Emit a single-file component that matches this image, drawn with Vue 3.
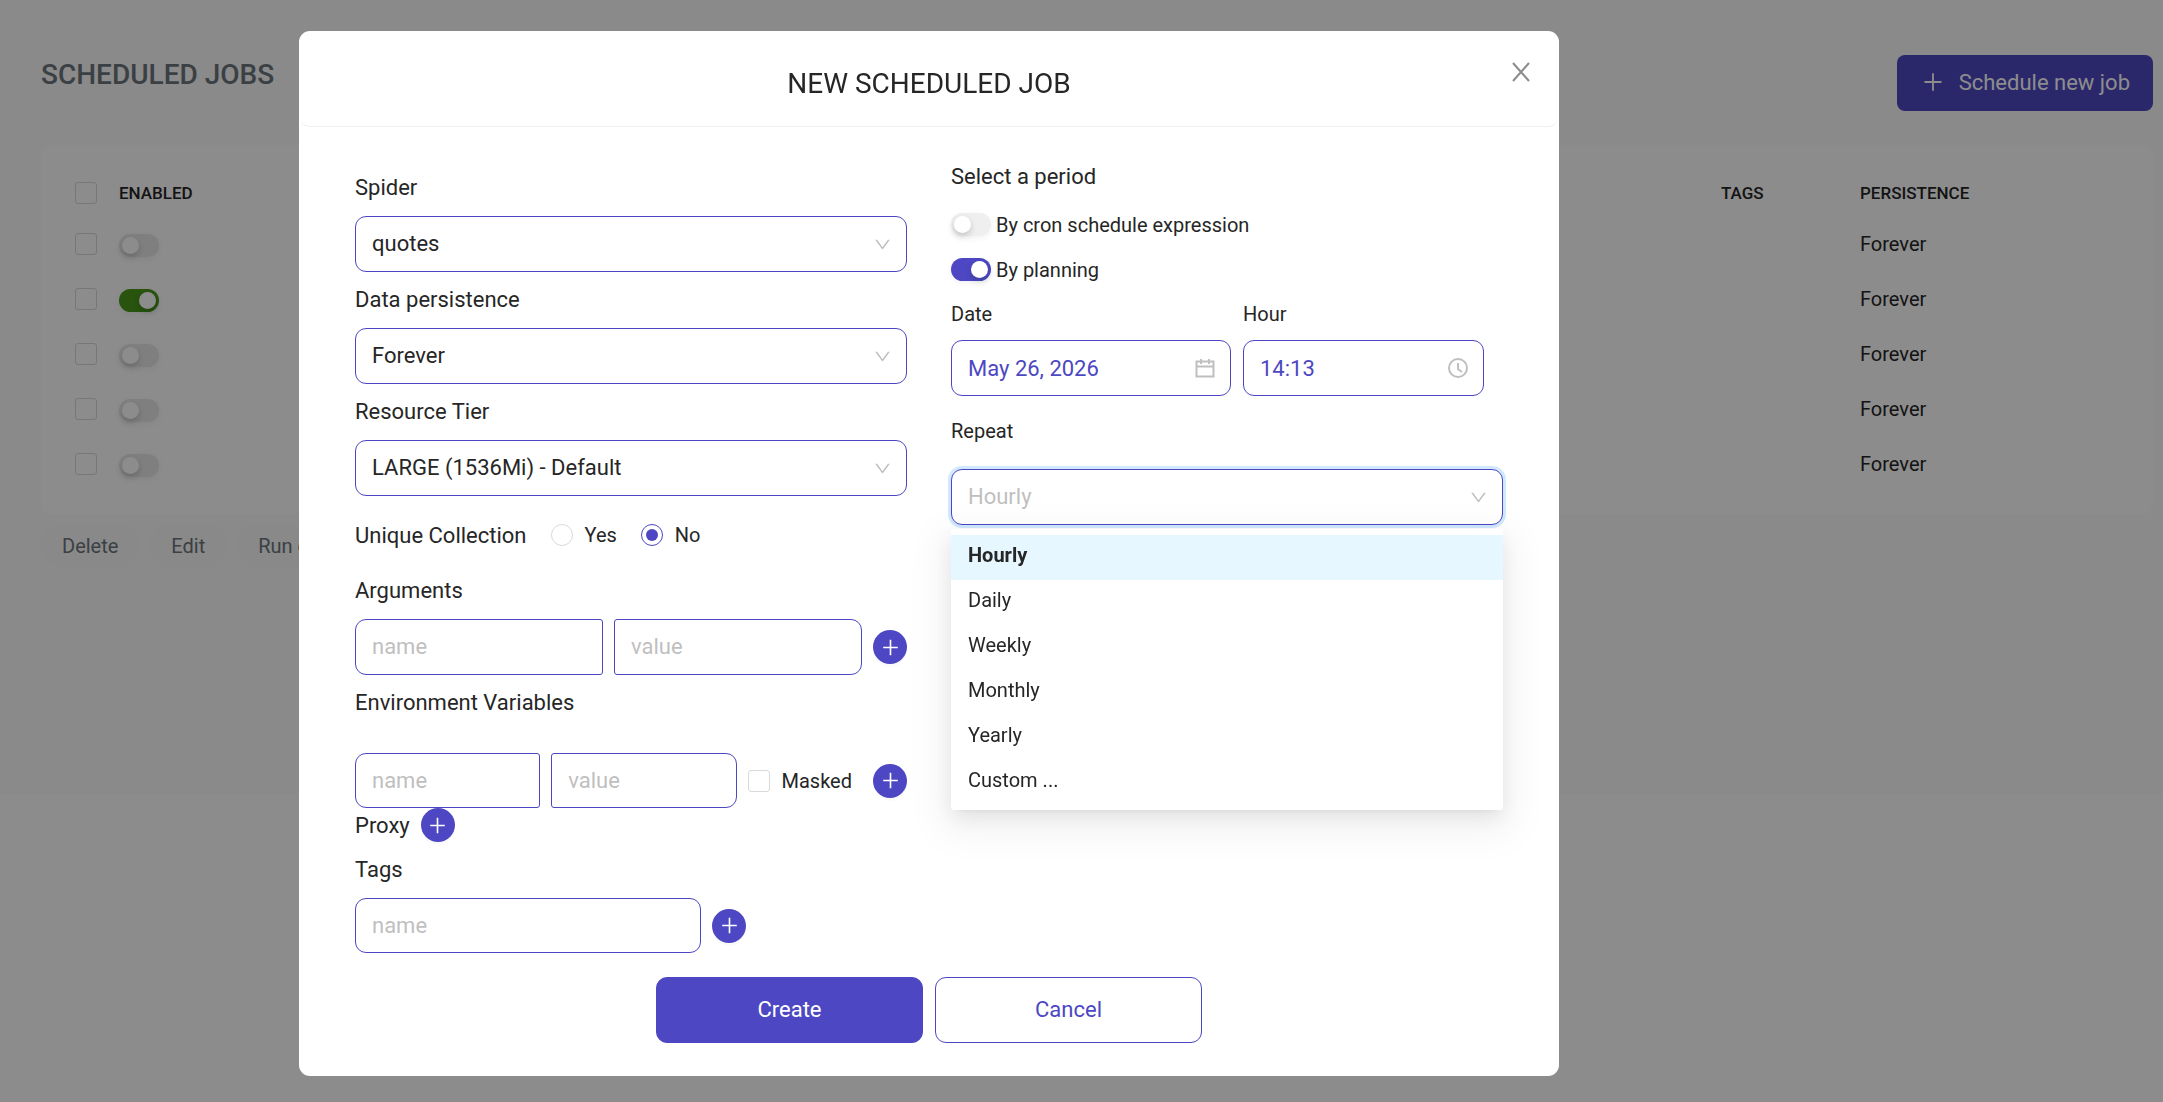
<script setup>
import { ref } from 'vue'

const jobs = ref([
  { id: 1, enabled: false, persistence: 'Forever' },
  { id: 2, enabled: true, persistence: 'Forever' },
  { id: 3, enabled: false, persistence: 'Forever' },
  { id: 4, enabled: false, persistence: 'Forever' },
  { id: 5, enabled: false, persistence: 'Forever' },
])

const selects = [
  { id: 'spider', label: 'Spider', value: 'quotes' },
  { id: 'data-persistence', label: 'Data persistence', value: 'Forever' },
  { id: 'resource-tier', label: 'Resource Tier', value: 'LARGE (1536Mi) - Default' },
]

const repeatOptions = ['Hourly', 'Daily', 'Weekly', 'Monthly', 'Yearly', 'Custom ...']
const repeat = ref('Hourly')
const unique = ref('no')
const byCron = ref(false)
const byPlanning = ref(true)
const date = ref('May 26, 2026')
const hour = ref('14:13')

const downPath =
  'M884 256h-75c-5.100 0-9.900 2.500-12.900 6.600L512 654.200 227.900 262.600c-3-4.100-7.800-6.600-12.900-6.600h-75c-6.500 0-10.300 7.400-6.500 12.700l352.600 486.100c12.800 17.600 39 17.600 51.700 0l352.600-486.100c3.900-5.300.1-12.700-6.400-12.700z'
const plusPaths = [
  'M482 152h60q8 0 8 8v704q0 8-8 8h-60q-8 0-8-8V160q0-8 8-8z',
  'M176 474h672q8 0 8 8v60q0 8-8 8H176q-8 0-8-8v-60q0-8 8-8z',
]
</script>

<template>
  <main class="page">
    <header class="page-head">
      <h1>SCHEDULED JOBS</h1>
      <button type="button" class="schedule-btn">
        <svg viewBox="64 64 896 896" class="icon-lg"><path v-for="p in plusPaths" :key="p" :d="p" /></svg>
        <span>Schedule new job</span>
      </button>
    </header>

    <section class="card">
      <table class="jobs">
        <colgroup>
          <col class="c-check" />
          <col class="c-enabled" />
          <col />
          <col class="c-tags" />
          <col class="c-persist" />
        </colgroup>
        <thead>
          <tr>
            <th><input type="checkbox" class="check" aria-label="Select all" /></th>
            <th>ENABLED</th>
            <th></th>
            <th>TAGS</th>
            <th>PERSISTENCE</th>
          </tr>
        </thead>
        <tbody>
          <tr v-for="job in jobs" :key="job.id">
            <td><input type="checkbox" class="check" aria-label="Select job" /></td>
            <td class="toggle"><input v-model="job.enabled" type="checkbox" role="switch" class="switch green" aria-label="Enabled" /></td>
            <td></td>
            <td></td>
            <td>{{ job.persistence }}</td>
          </tr>
        </tbody>
      </table>
    </section>

    <div class="actions">
      <button type="button">Delete</button>
      <button type="button">Edit</button>
      <button type="button">Run once</button>
    </div>
  </main>

  <div class="mask">
    <div class="modal" role="dialog" aria-labelledby="modal-title">
      <header class="modal-head">
        <h2 id="modal-title">NEW SCHEDULED JOB</h2>
        <button type="button" class="close" aria-label="Close">
          <svg viewBox="0 0 22 22"><path d="M3 2 19 20M19 2 3 20" /></svg>
        </button>
      </header>

      <form class="modal-body" @submit.prevent>
        <div class="column">
          <template v-for="s in selects" :key="s.id">
            <label class="field-label" :for="s.id">{{ s.label }}</label>
            <div class="select-wrap">
              <select :id="s.id" class="control"><option>{{ s.value }}</option></select>
              <svg viewBox="64 64 896 896" class="chevron"><path :d="downPath" /></svg>
            </div>
          </template>

          <div class="unique" role="radiogroup" aria-labelledby="unique-label">
            <span id="unique-label" class="unique-label">Unique Collection</span>
            <label class="choice"><input v-model="unique" type="radio" value="yes" class="radio" />Yes</label>
            <label class="choice"><input v-model="unique" type="radio" value="no" class="radio" />No</label>
          </div>

          <label class="field-label" for="arg-name">Arguments</label>
          <div class="row">
            <input id="arg-name" class="control left" type="text" placeholder="name" />
            <input class="control right" type="text" placeholder="value" aria-label="Argument value" />
            <button type="button" class="add" aria-label="Add argument">
              <svg viewBox="64 64 896 896"><path v-for="p in plusPaths" :key="p" :d="p" /></svg>
            </button>
          </div>

          <label class="field-label env-label" for="env-name">Environment Variables</label>
          <div class="row">
            <input id="env-name" class="control short left" type="text" placeholder="name" />
            <input class="control short right" type="text" placeholder="value" aria-label="Variable value" />
            <label class="masked"><input type="checkbox" class="check light" />Masked</label>
            <button type="button" class="add" aria-label="Add variable">
              <svg viewBox="64 64 896 896"><path v-for="p in plusPaths" :key="p" :d="p" /></svg>
            </button>
          </div>

          <div class="row">
            <span class="proxy">Proxy</span>
            <button type="button" class="add" aria-label="Add proxy">
              <svg viewBox="64 64 896 896"><path v-for="p in plusPaths" :key="p" :d="p" /></svg>
            </button>
          </div>

          <label class="field-label" for="tag-name">Tags</label>
          <div class="row">
            <input id="tag-name" class="control short tag" type="text" placeholder="name" />
            <button type="button" class="add" aria-label="Add tag">
              <svg viewBox="64 64 896 896"><path v-for="p in plusPaths" :key="p" :d="p" /></svg>
            </button>
          </div>
        </div>

        <div class="column">
          <p class="period">Select a period</p>
          <label class="switch-row"><input v-model="byCron" type="checkbox" role="switch" class="switch" />By cron schedule expression</label>
          <label class="switch-row"><input v-model="byPlanning" type="checkbox" role="switch" class="switch" />By planning</label>

          <div class="when">
            <div class="date">
              <label class="small-label" for="date">Date</label>
              <div class="select-wrap">
                <input id="date" v-model="date" class="control picker" type="text" />
                <svg viewBox="0 0 20 20" class="suffix">
                  <path d="M1.500 3.500h17v15h-17zM1.500 8.500h17M6 1v5M14 1v5" />
                </svg>
              </div>
            </div>
            <div class="hour">
              <label class="small-label" for="hour">Hour</label>
              <div class="select-wrap">
                <input id="hour" v-model="hour" class="control picker" type="text" />
                <svg viewBox="0 0 20 20" class="suffix">
                  <circle cx="10" cy="10" r="9" /><path d="M10 5v6l4 3" />
                </svg>
              </div>
            </div>
          </div>

          <label class="small-label repeat-label" for="repeat">Repeat</label>
          <div class="select-wrap">
            <select id="repeat" v-model="repeat" class="control open">
              <option v-for="o in repeatOptions" :key="o">{{ o }}</option>
            </select>
            <svg viewBox="64 64 896 896" class="chevron"><path :d="downPath" /></svg>
            <ul class="menu" role="listbox" aria-label="Repeat">
              <li
                v-for="o in repeatOptions"
                :key="o"
                role="option"
                :aria-selected="o === repeat"
                :class="{ selected: o === repeat }"
                @click="repeat = o"
              >{{ o }}</li>
            </ul>
          </div>
        </div>
      </form>

      <footer class="modal-foot">
        <button type="button" class="primary">Create</button>
        <button type="button" class="ghost">Cancel</button>
      </footer>
    </div>
  </div>
</template>

<style>
body {
  background: #fff;
}
</style>

<style scoped>
.page,
.mask {
  font-family: Roboto, 'Liberation Sans', sans-serif;
  font-size: 20px;
  color: #262626;
}
.page *,
.mask * {
  box-sizing: border-box;
}
button,
input,
select {
  font: inherit;
  margin: 0;
}
h1,
h2,
p,
ul {
  margin: 0;
  padding: 0;
}

/* Jobs page */
.page {
  background: #fbfbfb;
  box-sizing: border-box;
  padding: 55px 10px 0 41px;
  min-height: 794px;
}
.page-head {
  display: flex;
  justify-content: space-between;
  align-items: flex-start;
  height: 90px;
}
h1 {
  font-size: 28px;
  line-height: 40px;
  font-weight: 500;
  color: #6c757d;
}
.schedule-btn {
  display: flex;
  align-items: center;
  gap: 15px;
  height: 56px;
  padding: 0 23px 2px 25px;
  border: 0;
  border-radius: 8px;
  background: #4d47c3;
  color: #fff;
  font-size: 22px;
}
.icon-lg {
  width: 22px;
  height: 22px;
  fill: currentColor;
}
.card {
  background: #fff;
  border-radius: 11px;
  padding: 25px 33px 23px 34px;
}
.jobs {
  width: 100%;
  table-layout: fixed;
  border-collapse: collapse;
  text-align: left;
}
.c-check {
  width: 44px;
}
.c-enabled {
  width: 180px;
}
.c-tags {
  width: 139px;
}
.c-persist {
  width: 260px;
}
.jobs th {
  height: 46px;
  padding: 0;
  font-size: 17px;
  font-weight: 500;
}
.jobs td {
  height: 55px;
  padding: 0;
}
.jobs .toggle {
  padding-top: 4px;
}
.actions {
  display: flex;
  gap: 11px;
  padding-top: 9px;
}
.actions button {
  height: 45px;
  padding: 0 21px;
  border: 0;
  border-radius: 23px;
  background: #f9f9f9;
  color: #6c757d;
}

/* Shared inputs */
.check {
  appearance: none;
  display: block;
  width: 22px;
  height: 22px;
  border: 1px solid #d9d9d9;
  border-radius: 3px;
  background: #fff;
}
.check:checked {
  background: #4d47c3;
}
.switch {
  appearance: none;
  display: block;
  flex: none;
  width: 40px;
  height: 23px;
  padding: 3px;
  border-radius: 12px;
  background: #efefef;
  box-shadow: 0 2px 6px rgba(0, 0, 0, 0.06);
}
.switch::before {
  content: '';
  display: block;
  width: 17px;
  height: 17px;
  border-radius: 50%;
  background: #fff;
  box-shadow: 0 3px 6px rgba(0, 35, 11, 0.2);
}
.switch:checked {
  background: #4d47c3;
}
.switch:checked::before {
  margin-left: 17px;
}
.green {
  background: #e8e8e8;
}
.green:checked {
  background: #49991a;
}
.radio {
  appearance: none;
  display: grid;
  place-items: center;
  width: 22px;
  height: 22px;
  border: 1px solid #d9d9d9;
  border-radius: 50%;
}
.radio:checked {
  border-color: #4d47c3;
}
.radio:checked::before {
  content: '';
  width: 12px;
  height: 12px;
  border-radius: 50%;
  background: #4d47c3;
}

/* Modal */
.mask {
  position: fixed;
  inset: 0;
  display: flex;
  justify-content: center;
  align-items: flex-start;
  box-sizing: border-box;
  padding: 31px 305px 0 0;
  background: rgba(0, 0, 0, 0.45);
  overflow: auto;
}
.modal {
  width: 1260px;
  max-width: 100%;
  border-radius: 11px;
  background: #fff;
}
.modal-head {
  position: relative;
  height: 96px;
  padding-top: 33px;
  border-bottom: 1px solid #f0f0f0;
  border-radius: 11px;
}
h2 {
  font-size: 28px;
  line-height: 40px;
  font-weight: 400;
  text-align: center;
}
.close {
  position: absolute;
  top: 30px;
  right: 27px;
  width: 22px;
  height: 22px;
  padding: 0;
  border: 0;
  background: none;
}
.close svg {
  display: block;
  fill: none;
  stroke: #8c8c8c;
  stroke-width: 2;
}
.modal-body {
  display: grid;
  grid-template-columns: 1fr 1fr;
  column-gap: 44px;
  padding: 33px 56px 0;
}
.field-label {
  display: block;
  font-size: 22px;
  line-height: 56px;
}
.select-wrap {
  position: relative;
}
.control {
  appearance: none;
  display: block;
  width: 100%;
  min-width: 0;
  height: 56px;
  padding: 0 16px 2px;
  border: 1px solid #4d47c3;
  border-radius: 11px;
  background: #fff;
  color: #262626;
  font-size: 22px;
  outline: none;
}
.control::placeholder {
  color: #bfbfbf;
}
.control.short {
  height: 55px;
  padding-bottom: 0;
}
.control.left {
  border-radius: 11px 3px 3px 11px;
}
.control.right {
  border-radius: 3px 11px 11px 3px;
}
.control.picker {
  padding-bottom: 0;
  color: #4d47c3;
}
.control.open {
  color: #bfbfbf;
  box-shadow: 0 0 0 3px #d1e9ff;
}
.control.tag {
  width: 346px;
}
.chevron {
  position: absolute;
  top: 20px;
  right: 16px;
  width: 17px;
  height: 17px;
  fill: #bfbfbf;
  pointer-events: none;
}
.suffix {
  position: absolute;
  top: 18px;
  right: 16px;
  width: 20px;
  height: 20px;
  fill: none;
  stroke: #bfbfbf;
  stroke-width: 2;
}
.unique {
  display: flex;
  align-items: center;
  gap: 24px;
  height: 56px;
  margin-top: 11px;
}
.unique-label {
  font-size: 22px;
}
.choice,
.masked {
  display: flex;
  align-items: center;
  gap: 12px;
}
.masked {
  padding-right: 10px;
}
.env-label {
  margin-bottom: 22px;
}
.row {
  display: flex;
  align-items: center;
  gap: 11px;
}
.add {
  display: grid;
  place-items: center;
  flex: none;
  width: 34px;
  height: 34px;
  padding: 0;
  border: 0;
  border-radius: 50%;
  background: #4d47c3;
  box-shadow: 0 3px 0 rgba(0, 0, 0, 0.02);
}
.add svg {
  width: 19px;
  height: 19px;
  fill: #fff;
}
.proxy {
  font-size: 22px;
}
.period {
  font-size: 22px;
  line-height: 34px;
  margin-bottom: 8px;
}
.switch-row {
  display: flex;
  align-items: center;
  gap: 5px;
  height: 45px;
}
.when {
  display: flex;
  gap: 12px;
}
.date {
  width: 280px;
}
.hour {
  width: 241px;
}
.small-label {
  display: block;
  line-height: 44px;
  margin-bottom: 4px;
}
.repeat-label {
  margin: 13px 0 16px;
}
.menu {
  position: absolute;
  top: 60px;
  left: 0;
  right: 0;
  padding: 6px 0 5px;
  list-style: none;
  border-radius: 3px;
  background: #fff;
  box-shadow:
    0 4px 8px -6px rgba(0, 0, 0, 0.12),
    0 8px 22px rgba(0, 0, 0, 0.08),
    0 12px 38px 11px rgba(0, 0, 0, 0.05);
}
.menu li {
  height: 45px;
  padding: 0 17px;
  line-height: 40px;
}
.menu .selected {
  background: #e6f7ff;
  font-weight: 700;
}
.modal-foot {
  display: flex;
  justify-content: center;
  gap: 12px;
  padding: 24px 0 33px;
}
.modal-foot button {
  width: 267px;
  height: 66px;
  padding: 0 0 2px;
  border: 1px solid #4d47c3;
  border-radius: 11px;
  font-size: 22px;
}
.primary {
  background: #4d47c3;
  color: #fff;
}
.ghost {
  background: #fff;
  color: #4d47c3;
}
</style>
